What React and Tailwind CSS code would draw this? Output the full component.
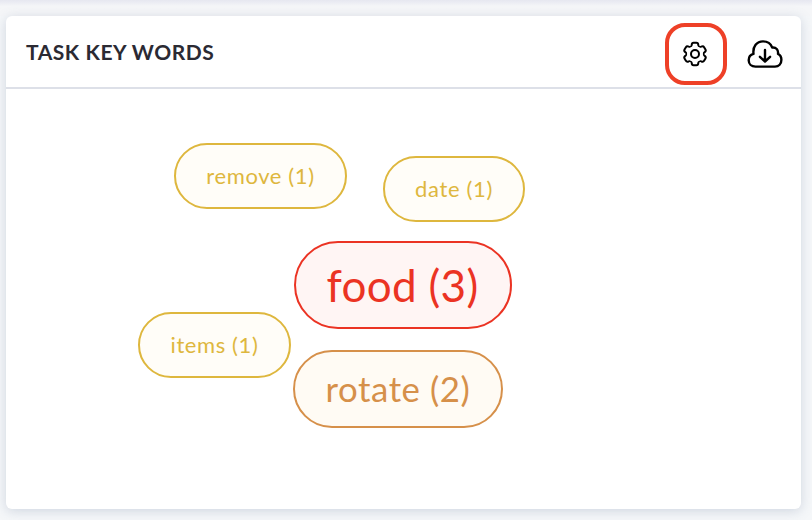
import React from 'react';

const KEYWORDS = [
  {
    word: 'remove',
    count: 1,
    className: 'left-[168px] top-[54px] w-[173px] h-[66px] text-[22px] tracking-[0.6px] text-[#deb73e] border-[#deb73e] bg-[#fffdf8]',
  },
  {
    word: 'date',
    count: 1,
    className: 'left-[377px] top-[67px] w-[142px] h-[66px] text-[22px] tracking-[0.65px] text-[#deb73e] border-[#deb73e] bg-[#fffdf8]',
  },
  {
    word: 'food',
    count: 3,
    className: 'left-[288px] top-[152px] w-[218px] h-[88px] pr-px text-[44px] tracking-[0.3px] text-[#eb3323] border-[#eb3323] bg-[#fff5f4]',
  },
  {
    word: 'items',
    count: 1,
    className: 'left-[132px] top-[223px] w-[153px] h-[66px] text-[22px] tracking-[0.6px] text-[#deb73e] border-[#deb73e] bg-[#fffdf8]',
  },
  {
    word: 'rotate',
    count: 2,
    className: 'left-[287px] top-[261px] w-[210px] h-[78px] text-[34.8px] tracking-[0.55px] text-[#d6904a] border-[#d6904a] bg-[#fffbf4]',
  },
];

const GearIcon = () => (
  <svg className="-ml-0.5 w-[26px] h-[26px]" viewBox="-13 -13 26 26" fill="none" stroke="black" strokeWidth="2" strokeLinejoin="round">
    {/* one tooth per 60 degrees, valleys meet at the half angle */}
    {[0, 60, 120, 180, 240, 300].map((angle) => (
      <path
        key={angle}
        transform={`rotate(${angle})`}
        d="M-4.65 -8.05 C-4 -7.7 -3.4 -8.1 -3.3 -9 C-3.2 -10.7 -2.7 -11.3 -1.4 -11.3 H1.4 C2.7 -11.3 3.2 -10.7 3.3 -9 C3.4 -8.1 4 -7.7 4.65 -8.05"
      />
    ))}
    <circle r="4" />
  </svg>
);

const CloudDownloadIcon = () => (
  <svg className="w-9 h-[30px]" viewBox="0 0 36 30" fill="none" stroke="black" strokeWidth="2.4" strokeLinecap="round" strokeLinejoin="round">
    <path d="M8.5 27.6 C4.6 27.6 1.7 24.9 1.7 21.2 C1.7 18 3.6 15.6 6.5 14.9 C5.6 7.4 9.8 2.4 16 2.4 C20.5 2.4 23.8 4.7 25.2 8.5 C29 8 31.6 10.9 31 14.9 C33.2 15.9 34.4 18 34.4 20.8 C34.4 25 31.8 27.6 28 27.6 Z" />
    <path d="M18 11 V22.2 M12.9 17.8 L18 22.5 L23.1 17.8" />
  </svg>
);

const Header = () => (
  <div className="flex h-[73px] items-center border-b-2 border-[#dde0e8] pl-5 pr-[18px]">
    <h2 className="flex-1 text-[21px] leading-none font-bold tracking-[0.55px] text-[#2b2a33]">TASK KEY WORDS</h2>
    <div className="flex items-center gap-5 pt-1">
      <button className="flex h-[62px] w-[62px] items-center justify-center rounded-[20px] border-4 border-[#ee4027]">
        <GearIcon />
      </button>
      <button>
        <CloudDownloadIcon />
      </button>
    </div>
  </div>
);

const App = () => (
  <div className="flex h-[520px] w-[812px] flex-col overflow-hidden bg-[#f5f7f9] font-['Lato',sans-serif]">
    <div className="h-4 shrink-0 bg-linear-to-b from-[#e6e7f0] to-[#f5f6f8] to-40%" />
    <div className="ml-1.5 flex h-[493px] w-[795px] flex-col rounded-[6px] bg-white shadow-[0_2px_12px_rgba(120,135,165,0.3)]">
      <Header />
      <div className="relative flex-1">
        {KEYWORDS.map(({ word, count, className }) => (
          <div
            key={word}
            className={`absolute flex items-center justify-center whitespace-nowrap rounded-full border-2 leading-none ${className}`}
          >
            {word} ({count})
          </div>
        ))}
      </div>
    </div>
  </div>
);

export default App;
